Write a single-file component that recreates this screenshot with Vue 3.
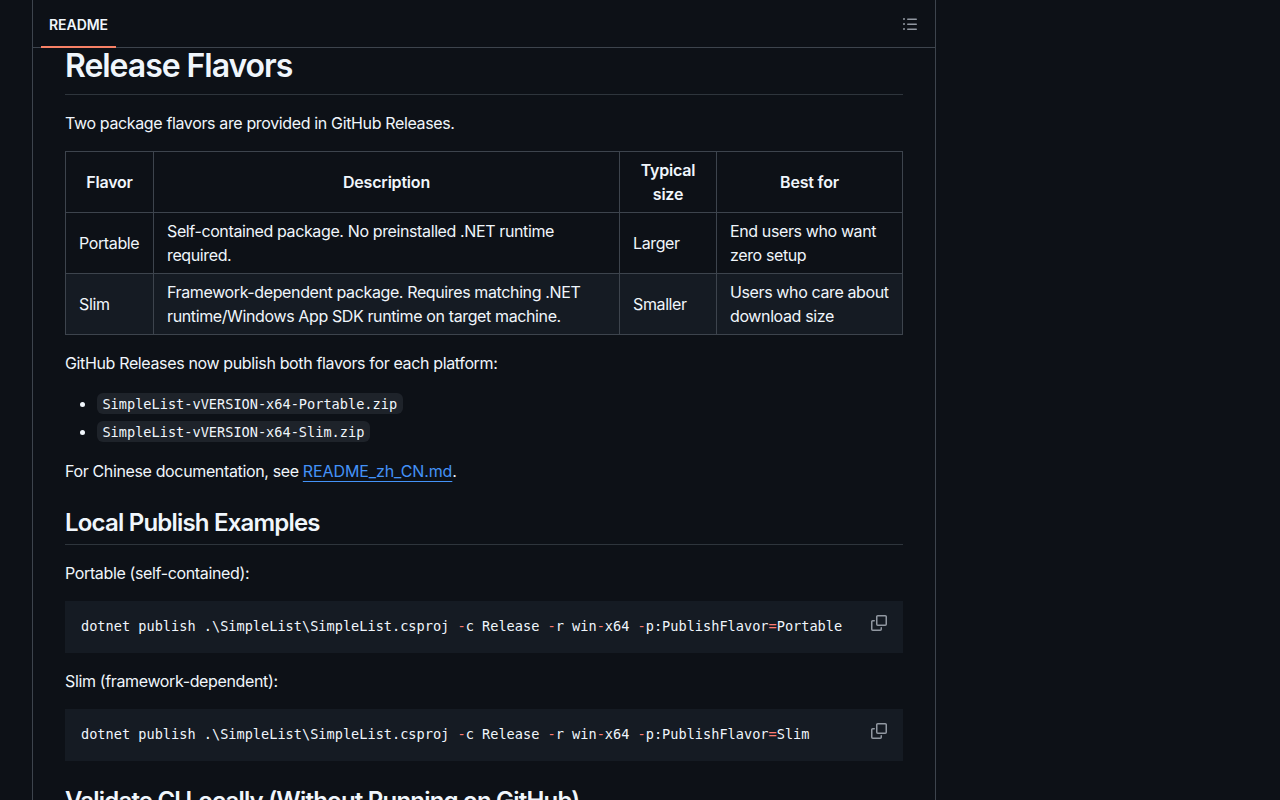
<script setup>
const rows = [
  { flavor: 'Portable', desc: 'Self-contained package. No preinstalled .NET runtime required.', size: 'Larger', best: 'End users who want zero setup' },
  { flavor: 'Slim', desc: 'Framework-dependent package. Requires matching .NET runtime/Windows App SDK runtime on target machine.', size: 'Smaller', best: 'Users who care about download size' }
]

const assets = ['SimpleList-vVERSION-x64-Portable.zip', 'SimpleList-vVERSION-x64-Slim.zip']

const commands = [
  { label: 'Portable (self-contained):', flavor: 'Portable' },
  { label: 'Slim (framework-dependent):', flavor: 'Slim' }
]
</script>

<template>
  <div class="page">
    <div class="readme-box">
      <header class="readme-head">
        <a class="tab">README</a>
        <svg class="outline-icon" viewBox="0 0 16 16" width="16" height="16">
          <path d="M5.75 2.5h8.5a.75.75 0 0 1 0 1.5h-8.5a.75.75 0 0 1 0-1.5Zm0 5h8.5a.75.75 0 0 1 0 1.5h-8.5a.75.75 0 0 1 0-1.5Zm0 5h8.5a.75.75 0 0 1 0 1.5h-8.5a.75.75 0 0 1 0-1.5ZM2 14a1 1 0 1 1 0-2 1 1 0 0 1 0 2Zm1-6a1 1 0 1 1-2 0 1 1 0 0 1 2 0ZM2 4a1 1 0 1 1 0-2 1 1 0 0 1 0 2Z" />
        </svg>
      </header>

      <article class="markdown">
        <h1>Release Flavors</h1>
        <p>Two package flavors are provided in GitHub Releases.</p>

        <table>
          <colgroup>
            <col class="col-flavor" />
            <col class="col-desc" />
            <col class="col-size" />
            <col />
          </colgroup>
          <thead>
            <tr>
              <th>Flavor</th>
              <th>Description</th>
              <th>Typical size</th>
              <th>Best for</th>
            </tr>
          </thead>
          <tbody>
            <tr v-for="row in rows" :key="row.flavor">
              <td>{{ row.flavor }}</td>
              <td>{{ row.desc }}</td>
              <td>{{ row.size }}</td>
              <td>{{ row.best }}</td>
            </tr>
          </tbody>
        </table>

        <p>GitHub Releases now publish both flavors for each platform:</p>
        <ul>
          <li v-for="asset in assets" :key="asset"><code>{{ asset }}</code></li>
        </ul>
        <p>For Chinese documentation, see <a class="link" href="#">README_zh_CN.md</a>.</p>

        <h2>Local Publish Examples</h2>

        <template v-for="cmd in commands" :key="cmd.flavor">
          <p>{{ cmd.label }}</p>
          <div class="code-block">
            <pre>dotnet publish .\SimpleList\SimpleList.csproj <span class="op">-</span>c Release <span class="op">-</span>r win<span class="op">-</span>x64 <span class="op">-</span>p:PublishFlavor<span class="op">=</span>{{ cmd.flavor }}</pre>
            <svg class="copy-icon" viewBox="0 0 16 16" width="16" height="16">
              <path d="M0 6.75C0 5.784.784 5 1.75 5h1.5a.75.75 0 0 1 0 1.5h-1.5a.25.25 0 0 0-.25.25v7.5c0 .138.112.25.25.25h7.5a.25.25 0 0 0 .25-.25v-1.5a.75.75 0 0 1 1.5 0v1.5A1.75 1.75 0 0 1 9.25 16h-7.5A1.75 1.75 0 0 1 0 14.25Z" />
              <path d="M5 1.75C5 .784 5.784 0 6.75 0h7.5C15.216 0 16 .784 16 1.75v7.5A1.75 1.75 0 0 1 14.25 11h-7.5A1.75 1.75 0 0 1 5 9.25Zm1.75-.25a.25.25 0 0 0-.25.25v7.5c0 .138.112.25.25.25h7.5a.25.25 0 0 0 .25-.25v-7.5a.25.25 0 0 0-.25-.25Z" />
            </svg>
          </div>
        </template>

        <h2>Validate CI Locally (Without Running on GitHub)</h2>
      </article>
    </div>
  </div>
</template>

<style>
html, body {
  margin: 0;
  background: #0d1117;
}
</style>

<style scoped>
.page {
  height: 800px;
  overflow: hidden;
  padding-left: 32px;
  background: #0d1117;
  color: #f0f6fc;
  font-family: Inter, "Liberation Sans", sans-serif;
  font-size: 16px;
  line-height: 24px;
  letter-spacing: -0.36px;
}

.readme-box {
  width: 902px;
  height: 800px;
  border-left: 1px solid #3d444d;
  border-right: 1px solid #3d444d;
}

.readme-head {
  position: relative;
  z-index: 1;
  display: flex;
  align-items: center;
  justify-content: space-between;
  box-sizing: border-box;
  height: 48px;
  padding: 0 17px 0 8px;
  border-bottom: 1px solid #3d444d;
}

.tab {
  box-sizing: border-box;
  height: 48px;
  padding: 13px 8px 0;
  border-bottom: 2px solid #f78166;
  font-size: 14px;
  font-weight: 600;
  line-height: 24px;
  letter-spacing: -0.05px;
}

.outline-icon {
  fill: #9198a1;
}

.markdown {
  margin-top: -4px;
  padding: 0 32px;
}

h1 {
  margin: 0 0 16px;
  padding: 2px 0 7.6px;
  border-bottom: 1px solid #3d444db3;
  font-size: 32px;
  font-weight: 600;
  line-height: 40px;
  letter-spacing: -1.05px;
}

h2 {
  margin: 24px 0 16px;
  padding: 1px 0 6.2px;
  border-bottom: 1px solid #3d444db3;
  font-size: 24px;
  font-weight: 600;
  line-height: 30px;
  letter-spacing: -0.8px;
}

p {
  margin: 0 0 16px;
}

table {
  width: 838px;
  margin-bottom: 16px;
  border-collapse: collapse;
  table-layout: fixed;
}

.col-flavor { width: 88px; }
.col-desc { width: 466px; }
.col-size { width: 97px; }

th, td {
  padding: 6px 13px;
  border: 1px solid #3d444d;
}

th {
  font-weight: 600;
  text-align: center;
  letter-spacing: -0.2px;
}

td {
  text-align: left;
  letter-spacing: -0.38px;
}

tbody tr:nth-child(2) {
  background: #151b23;
}

ul {
  margin: 0 0 16px;
  padding-left: 32px;
}

li + li {
  margin-top: 4px;
}

code {
  padding: 2.72px 5.44px;
  border-radius: 6px;
  background: #656c7633;
  font-family: "DejaVu Sans Mono", "Liberation Mono", monospace;
  font-size: 13.6px;
  line-height: 20px;
  letter-spacing: 0;
}

.link {
  color: #4493f8;
  letter-spacing: -0.1px;
  text-decoration: underline;
  text-underline-offset: 4px;
}

.code-block {
  position: relative;
  margin-bottom: 16px;
  background: #151b23;
}

pre {
  margin: 0;
  padding: 15px 16px 17px;
  font-family: "DejaVu Sans Mono", "Liberation Mono", monospace;
  font-size: 13.6px;
  line-height: 20px;
  letter-spacing: 0;
  color: #f0f6fc;
}

.op {
  color: #ff7b72;
}

.copy-icon {
  position: absolute;
  top: 14px;
  right: 16px;
  fill: #9198a1;
}
</style>
